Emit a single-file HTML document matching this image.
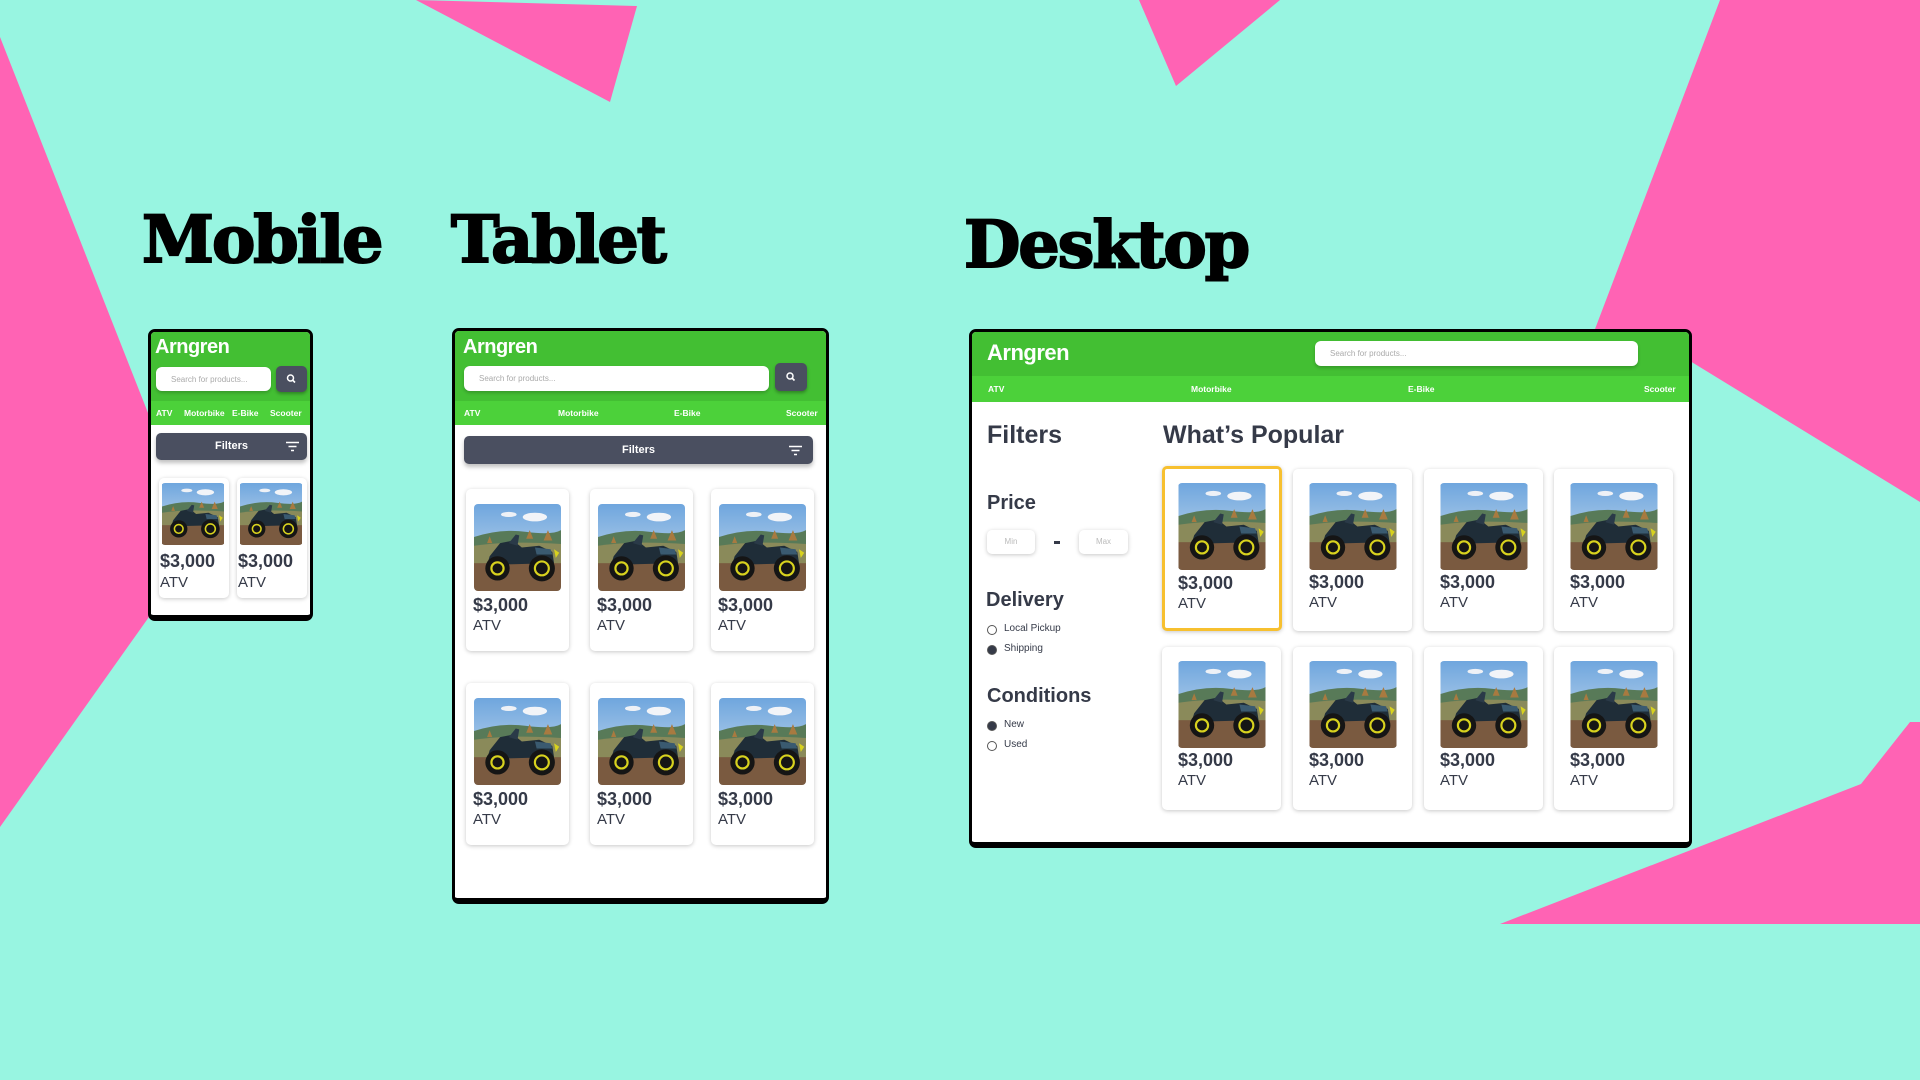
<!DOCTYPE html>
<html><head><meta charset="utf-8"><style>
*{margin:0;padding:0;box-sizing:border-box}
body{width:1920px;height:1080px;background:#98f5e1;position:relative;overflow:hidden;font-family:"Liberation Sans",sans-serif;color:#353a48}
.abs{position:absolute}
.h{position:absolute;font-family:"DejaVu Serif","Liberation Serif",serif;font-weight:900;font-size:65px;color:#000;letter-spacing:-2px;line-height:1;-webkit-text-stroke:2px #000}
.frame{position:absolute;background:#fff;border:3px solid #000;border-bottom-width:6px;border-radius:7px;overflow:hidden}
.hdr{position:absolute;left:0;right:0;top:0;background:#43bf33}
.nav{position:absolute;left:0;right:0;background:#4cd13a;color:#fff;font-weight:bold}
.nav span{position:absolute;top:50%;transform:translateY(-50%)}
.logo{position:absolute;color:#fff;font-weight:bold;letter-spacing:-0.5px}
.search{position:absolute;background:#fff;border-radius:6px;color:#aaa;box-shadow:0 2px 3px rgba(0,0,0,.2)}
.btn{position:absolute;background:#4a4f60;border-radius:5px;box-shadow:0 2px 3px rgba(0,0,0,.3)}
.fbar{position:absolute;background:#4a4f60;border-radius:5px;color:#fff;font-weight:bold;text-align:center;box-shadow:0 3px 4px rgba(0,0,0,.25)}
.card{position:absolute;background:#fff;border-radius:5px;box-shadow:0 1px 4px rgba(0,0,0,.22)}
.card svg{position:absolute;border-radius:4px}
.pr{position:absolute;font-weight:bold;color:#353a48}
.at{position:absolute;color:#353a48}
.radio{position:absolute;width:10px;height:10px;border-radius:50%;border:1px solid #555}
</style></head><body>
<svg width="0" height="0" style="position:absolute"><defs>
<linearGradient id="sky" x1="0" y1="0" x2="0" y2="1"><stop offset="0" stop-color="#6fa6de"/><stop offset="1" stop-color="#d4e3ef"/></linearGradient>
<symbol id="atv" viewBox="0 0 100 100">
<rect width="100" height="100" fill="url(#sky)"/>
<ellipse cx="70" cy="15" rx="14" ry="5" fill="#f2f4f8"/><ellipse cx="40" cy="12" rx="9" ry="3" fill="#eef1f6"/>
<path d="M0 38 Q30 28 60 32 T100 30 V60 H0Z" fill="#587a58"/>
<path d="M0 48 Q40 42 100 46 V70 H0Z" fill="#8a8a5a"/>
<path d="M60 40 l4 -10 l4 10z M80 42 l5 -12 l5 12z M15 45 l3 -8 l3 8z" fill="#a87a40"/>
<rect y="68" width="100" height="32" fill="#7a5a40"/>
<path d="M18 60 L30 45 L45 42 L55 50 L75 48 L90 55 L92 68 L15 70Z" fill="#1f2d38"/>
<path d="M40 45 L48 35 L52 36 L50 48Z" fill="#2a3a48"/>
<path d="M70 50 L88 52 L90 58 L72 58Z" fill="#3a5a70"/>
<circle cx="27" cy="74" r="14" fill="#151515"/><circle cx="27" cy="74" r="7" fill="none" stroke="#d8d21e" stroke-width="2.5"/>
<circle cx="78" cy="74" r="15" fill="#151515"/><circle cx="78" cy="74" r="8" fill="none" stroke="#d8d21e" stroke-width="2.5"/>
<path d="M92 52 l6 4 l-4 6z" fill="#d8d21e"/>
</symbol></defs></svg>

<svg class="abs" style="left:0;top:0" width="1920" height="1080">
<polygon points="0,37 200,545 0,827" fill="#ff63b4"/>
<polygon points="416,0 637,6 610,102" fill="#ff63b4"/>
<polygon points="1139,0 1280,0 1176,86" fill="#ff63b4"/>
<polygon points="1720,0 1920,0 1920,502 1690,361 1592,337" fill="#ff63b4"/>
<polygon points="1500,924 1861,784 1910,722 1920,722 1920,924" fill="#ff63b4"/>
</svg>

<div class="h" style="left:142px;top:208px">Mobile</div>
<div class="h" style="left:451px;top:208px">Tablet</div>
<div class="h" style="left:964px;top:213px">Desktop</div>

<!-- Mobile -->
<div class="frame" style="left:148px;top:329px;width:165px;height:292px">
 <div class="hdr" style="height:69px"></div>
 <div class="logo" style="left:4px;top:4px;font-size:20px">Arngren</div>
 <div class="search" style="left:5px;top:35px;width:115px;height:24px;font-size:8px;padding:8px 0 0 15px">Search for products...</div>
 <div class="btn" style="left:125px;top:34px;width:31px;height:26px"><svg width="31" height="26"><circle cx="14.5" cy="12" r="3" fill="none" stroke="#fff" stroke-width="1.5"/><line x1="16.5" y1="14" x2="19" y2="16.5" stroke="#fff" stroke-width="1.6"/></svg></div>
 <div class="nav" style="top:69px;height:24px;font-size:8.5px"><span style="left:5px">ATV</span><span style="left:33px">Motorbike</span><span style="left:81px">E-Bike</span><span style="left:119px">Scooter</span></div>
 <div class="fbar" style="left:5px;top:101px;width:151px;height:27px;font-size:11px;line-height:27px">Filters<svg class="abs" style="left:130px;top:8px" width="13" height="11"><path d="M0 1.5H13M2.5 5.5H10.5M5 9.5H8" stroke="#fff" stroke-width="1.6"/></svg></div>
 <div class="card" style="left:8px;top:146px;width:70px;height:120px"><svg style="left:2px;top:5px" width="64" height="62"><use href="#atv"/></svg><div class="pr" style="left:1px;top:73px;font-size:18px">$3,000</div><div class="at" style="left:1px;top:96px;font-size:15px">ATV</div></div>
 <div class="card" style="left:86px;top:146px;width:70px;height:120px"><svg style="left:2px;top:5px" width="64" height="62"><use href="#atv"/></svg><div class="pr" style="left:1px;top:73px;font-size:18px">$3,000</div><div class="at" style="left:1px;top:96px;font-size:15px">ATV</div></div>
</div>

<!-- Tablet -->
<div class="frame" style="left:452px;top:328px;width:377px;height:576px">
 <div class="hdr" style="height:70px"></div>
 <div class="logo" style="left:8px;top:5px;font-size:20px">Arngren</div>
 <div class="search" style="left:9px;top:35px;width:305px;height:25px;font-size:8px;padding:8px 0 0 15px">Search for products...</div>
 <div class="btn" style="left:320px;top:32px;width:32px;height:28px"><svg width="32" height="28"><circle cx="15" cy="13" r="3" fill="none" stroke="#fff" stroke-width="1.5"/><line x1="17" y1="15" x2="19.5" y2="17.5" stroke="#fff" stroke-width="1.6"/></svg></div>
 <div class="nav" style="top:70px;height:24px;font-size:8.5px"><span style="left:9px">ATV</span><span style="left:103px">Motorbike</span><span style="left:219px">E-Bike</span><span style="left:331px">Scooter</span></div>
 <div class="fbar" style="left:9px;top:105px;width:349px;height:28px;font-size:11px;line-height:28px">Filters<svg class="abs" style="left:325px;top:9px" width="13" height="11"><path d="M0 1.5H13M2.5 5.5H10.5M5 9.5H8" stroke="#fff" stroke-width="1.6"/></svg></div>
 <div class="card" style="left:11px;top:158px;width:103px;height:162px"><svg style="left:8px;top:15px" width="87" height="87"><use href="#atv"/></svg><div class="pr" style="left:7px;top:106px;font-size:18px">$3,000</div><div class="at" style="left:7px;top:128px;font-size:15px">ATV</div></div>
 <div class="card" style="left:135px;top:158px;width:103px;height:162px"><svg style="left:8px;top:15px" width="87" height="87"><use href="#atv"/></svg><div class="pr" style="left:7px;top:106px;font-size:18px">$3,000</div><div class="at" style="left:7px;top:128px;font-size:15px">ATV</div></div>
 <div class="card" style="left:256px;top:158px;width:103px;height:162px"><svg style="left:8px;top:15px" width="87" height="87"><use href="#atv"/></svg><div class="pr" style="left:7px;top:106px;font-size:18px">$3,000</div><div class="at" style="left:7px;top:128px;font-size:15px">ATV</div></div>
 <div class="card" style="left:11px;top:352px;width:103px;height:162px"><svg style="left:8px;top:15px" width="87" height="87"><use href="#atv"/></svg><div class="pr" style="left:7px;top:106px;font-size:18px">$3,000</div><div class="at" style="left:7px;top:128px;font-size:15px">ATV</div></div>
 <div class="card" style="left:135px;top:352px;width:103px;height:162px"><svg style="left:8px;top:15px" width="87" height="87"><use href="#atv"/></svg><div class="pr" style="left:7px;top:106px;font-size:18px">$3,000</div><div class="at" style="left:7px;top:128px;font-size:15px">ATV</div></div>
 <div class="card" style="left:256px;top:352px;width:103px;height:162px"><svg style="left:8px;top:15px" width="87" height="87"><use href="#atv"/></svg><div class="pr" style="left:7px;top:106px;font-size:18px">$3,000</div><div class="at" style="left:7px;top:128px;font-size:15px">ATV</div></div>
</div>

<!-- Desktop -->
<div class="frame" style="left:969px;top:329px;width:723px;height:519px">
 <div class="hdr" style="height:44px"></div>
 <div class="logo" style="left:15px;top:8px;font-size:22px">Arngren</div>
 <div class="search" style="left:343px;top:9px;width:323px;height:25px;font-size:8px;padding:8px 0 0 15px">Search for products...</div>
 <div class="nav" style="top:44px;height:26px;font-size:8.5px"><span style="left:16px">ATV</span><span style="left:219px">Motorbike</span><span style="left:436px">E-Bike</span><span style="left:672px">Scooter</span></div>
 <div class="abs" style="left:15px;top:89px;font-size:25px;font-weight:bold">Filters</div>
 <div class="abs" style="left:191px;top:89px;font-size:25px;font-weight:bold">What’s Popular</div>
 <div class="abs" style="left:15px;top:160px;font-size:20px;font-weight:bold">Price</div>
 <div class="card" style="left:15px;top:198px;width:48px;height:24px;font-size:8px;color:#bbb;text-align:center;line-height:24px">Min</div>
 <div class="abs" style="left:82px;top:209px;width:6px;height:3px;background:#353a48"></div>
 <div class="card" style="left:107px;top:198px;width:49px;height:24px;font-size:8px;color:#bbb;text-align:center;line-height:24px">Max</div>
 <div class="abs" style="left:14px;top:257px;font-size:20px;font-weight:bold">Delivery</div>
 <div class="radio" style="left:15px;top:293px"></div><div class="abs" style="left:32px;top:291px;font-size:10px">Local Pickup</div>
 <div class="radio" style="left:15px;top:313px;background:#353a48"></div><div class="abs" style="left:32px;top:311px;font-size:10px">Shipping</div>
 <div class="abs" style="left:15px;top:353px;font-size:20px;font-weight:bold">Conditions</div>
 <div class="radio" style="left:15px;top:389px;background:#353a48"></div><div class="abs" style="left:32px;top:387px;font-size:10px">New</div>
 <div class="radio" style="left:15px;top:409px"></div><div class="abs" style="left:32px;top:407px;font-size:10px">Used</div>
 <div class="card" style="left:190px;top:134px;width:120px;height:165px;border:3px solid #f7c02f"><svg style="left:13px;top:14px" width="88" height="87"><use href="#atv"/></svg><div class="pr" style="left:13px;top:104px;font-size:18px">$3,000</div><div class="at" style="left:13px;top:126px;font-size:15px">ATV</div></div>
 <div class="card" style="left:321px;top:137px;width:119px;height:162px"><svg style="left:16px;top:14px" width="88" height="87"><use href="#atv"/></svg><div class="pr" style="left:16px;top:103px;font-size:18px">$3,000</div><div class="at" style="left:16px;top:125px;font-size:15px">ATV</div></div>
 <div class="card" style="left:452px;top:137px;width:119px;height:162px"><svg style="left:16px;top:14px" width="88" height="87"><use href="#atv"/></svg><div class="pr" style="left:16px;top:103px;font-size:18px">$3,000</div><div class="at" style="left:16px;top:125px;font-size:15px">ATV</div></div>
 <div class="card" style="left:582px;top:137px;width:119px;height:162px"><svg style="left:16px;top:14px" width="88" height="87"><use href="#atv"/></svg><div class="pr" style="left:16px;top:103px;font-size:18px">$3,000</div><div class="at" style="left:16px;top:125px;font-size:15px">ATV</div></div>
 <div class="card" style="left:190px;top:315px;width:119px;height:163px"><svg style="left:16px;top:14px" width="88" height="87"><use href="#atv"/></svg><div class="pr" style="left:16px;top:103px;font-size:18px">$3,000</div><div class="at" style="left:16px;top:125px;font-size:15px">ATV</div></div>
 <div class="card" style="left:321px;top:315px;width:119px;height:163px"><svg style="left:16px;top:14px" width="88" height="87"><use href="#atv"/></svg><div class="pr" style="left:16px;top:103px;font-size:18px">$3,000</div><div class="at" style="left:16px;top:125px;font-size:15px">ATV</div></div>
 <div class="card" style="left:452px;top:315px;width:119px;height:163px"><svg style="left:16px;top:14px" width="88" height="87"><use href="#atv"/></svg><div class="pr" style="left:16px;top:103px;font-size:18px">$3,000</div><div class="at" style="left:16px;top:125px;font-size:15px">ATV</div></div>
 <div class="card" style="left:582px;top:315px;width:119px;height:163px"><svg style="left:16px;top:14px" width="88" height="87"><use href="#atv"/></svg><div class="pr" style="left:16px;top:103px;font-size:18px">$3,000</div><div class="at" style="left:16px;top:125px;font-size:15px">ATV</div></div>
</div>
</body></html>
